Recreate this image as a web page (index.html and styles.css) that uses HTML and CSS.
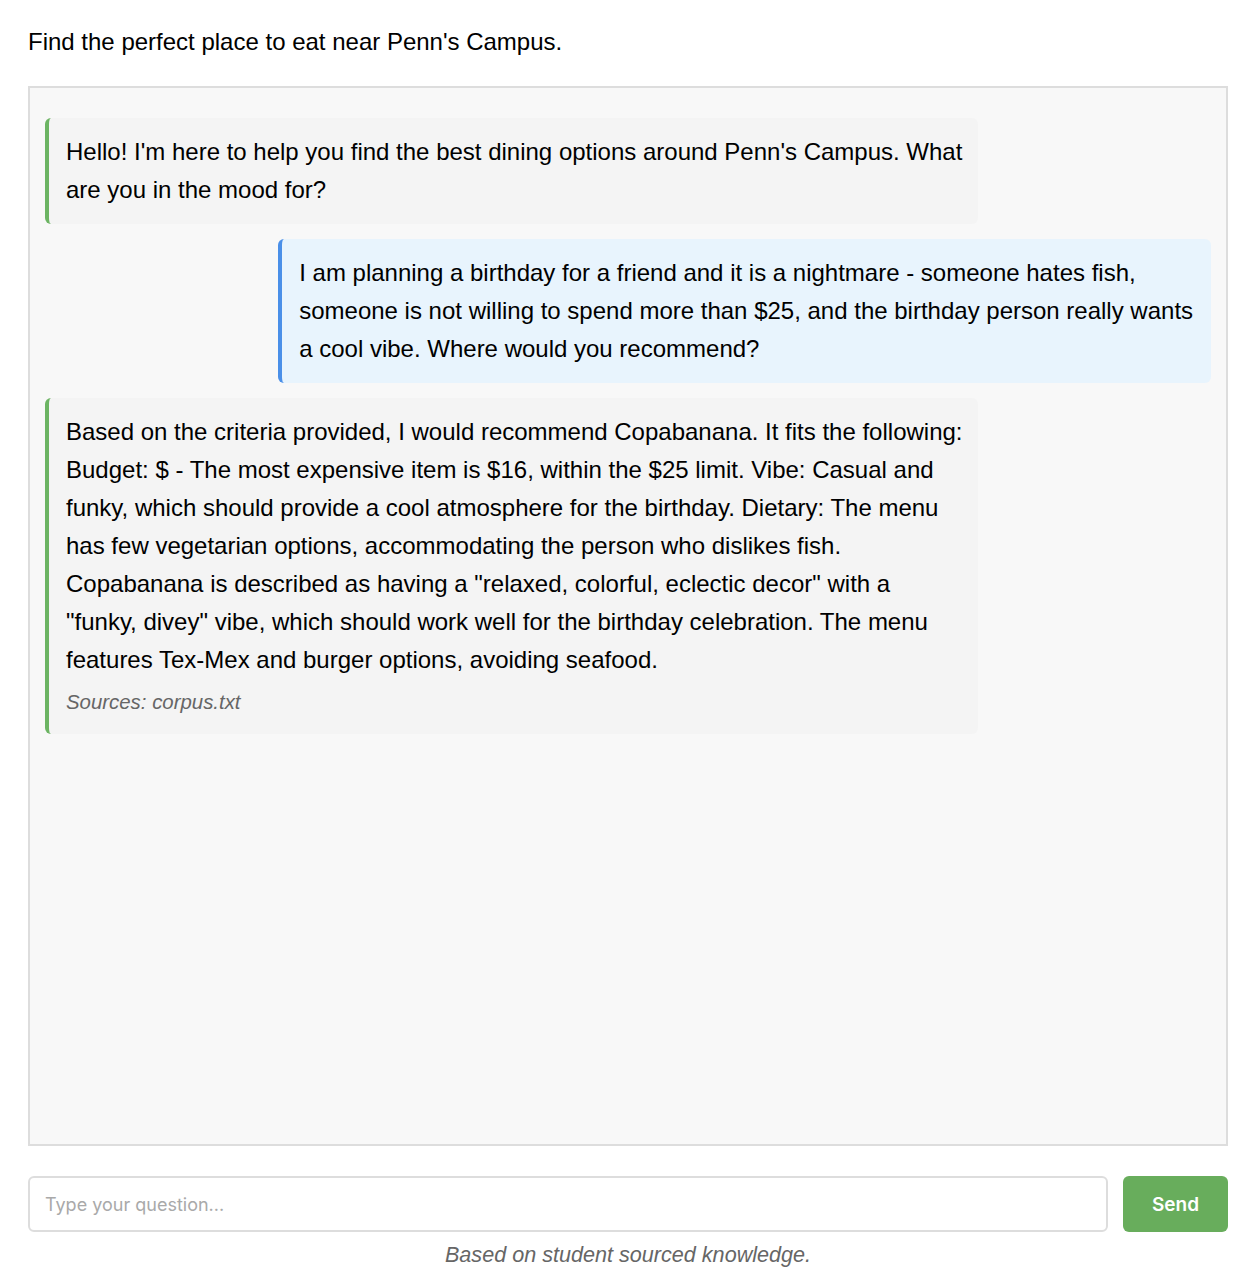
FILE: index.html
```html
<!DOCTYPE html>
<html lang="en">
<head>
<meta charset="utf-8">
<title>Penn Dining Chat</title>
<link rel="stylesheet" href="styles.css">
</head>
<body>
  <main class="page">
    <p class="title">Find the perfect place to eat near Penn's Campus.</p>
    <div class="chat">
      <div class="msg bot">Hello! I'm here to help you find the best dining options around Penn's Campus. What are you in the mood for?</div>
      <div class="msg user">I am planning a birthday for a friend and it is a nightmare - someone hates fish, someone is not willing to spend more than $25, and the birthday person really wants a cool vibe. Where would you recommend?</div>
      <div class="msg bot">Based on the criteria provided, I would recommend Copabanana. It fits the following: Budget: $ - The most expensive item is $16, within the $25 limit. Vibe: Casual and funky, which should provide a cool atmosphere for the birthday. Dietary: The menu has few vegetarian options, accommodating the person who dislikes fish. Copabanana is described as having a "relaxed, colorful, eclectic decor" with a "funky, divey" vibe, which should work well for the birthday celebration. The menu features Tex-Mex and burger options, avoiding seafood.
        <div class="sources">Sources: corpus.txt</div>
      </div>
    </div>
    <div class="input-row">
      <input class="question" type="text" placeholder="Type your question...">
      <button class="send">Send</button>
    </div>
    <p class="footer">Based on student sourced knowledge.</p>
  </main>
</body>
</html>
```

FILE: styles.css
```css
body {
  margin: 0;
  padding: 0 28px;
  font-family: "Liberation Sans", Arial, Helvetica, sans-serif;
  font-size: 24px;
  color: #000;
  background: #fff;
}

.page {
  width: 1200px;
}

.title {
  margin: 23px 0 25px;
  line-height: 38px;
}

.chat {
  box-sizing: border-box;
  height: 1060px;
  border: 2px solid #ddd;
  background: #f8f8f8;
  padding: 15px;
  overflow: hidden;
}

.msg {
  box-sizing: border-box;
  max-width: 80%;
  margin: 15px 0;
  padding: 15px 15px 15px 17px;
  border-radius: 6px;
  line-height: 38px;
}

.bot {
  background: #f4f4f4;
  border-left: 4px solid #6cb463;
}

.user {
  margin-left: auto;
  background: #e8f4fd;
  border-left: 4px solid #4a8fe8;
}

.sources {
  margin-top: 6px;
  font-size: 20.4px;
  line-height: 34px;
  font-style: italic;
  color: #666;
}

.input-row {
  display: flex;
  gap: 15px;
  margin-top: 30px;
}

.question {
  flex: 1;
  box-sizing: border-box;
  height: 56px;
  border: 2px solid #ddd;
  border-radius: 6px;
  padding: 0 15px;
  font-family: Inter, "Noto Sans", sans-serif;
  font-size: 18px;
  color: #000;
  background: #fff;
  outline: none;
}

.question::placeholder {
  color: #a9a9a9;
}

.send {
  box-sizing: border-box;
  width: 105px;
  height: 56px;
  border: none;
  border-radius: 6px;
  background: #68ad5c;
  color: #fff;
  font-family: Inter, "Noto Sans", sans-serif;
  font-size: 19px;
  font-weight: 600;
}

.footer {
  margin: 6px 0 0;
  text-align: center;
  font-size: 21.6px;
  line-height: 34px;
  font-style: italic;
  color: #666;
}
```
